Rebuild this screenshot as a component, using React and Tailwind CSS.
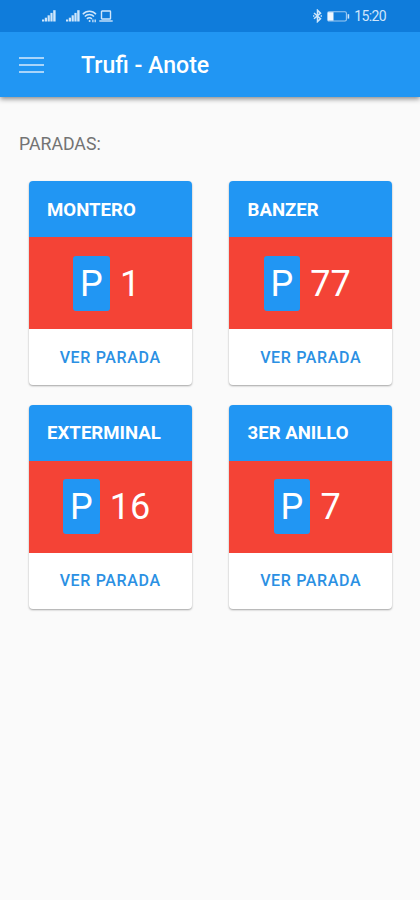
import React from "react";

const stops = [
  { name: "MONTERO", count: 1 },
  { name: "BANZER", count: 77 },
  { name: "EXTERMINAL", count: 16 },
  { name: "3ER ANILLO", count: 7 },
];

function SignalIcon() {
  return (
    <svg width="14" height="12" viewBox="0 0 14 12" fill="currentColor">
      <rect x="0" y="9.5" width="2.2" height="2" />
      <rect x="2.8" y="7.7" width="2.2" height="3.8" />
      <rect x="5.6" y="5.3" width="2.2" height="6.2" />
      <rect x="8.4" y="2.9" width="2.2" height="8.6" />
      <rect x="11.2" y="0.2" width="2.4" height="11.3" />
    </svg>
  );
}

function WifiIcon() {
  return (
    <svg width="15" height="13" viewBox="0 0 15 13" fill="none" stroke="currentColor" strokeWidth="1.5">
      <path d="M0.8 4.2C4.4 0.3 10.4 0.3 14 4.2" />
      <path d="M2.8 6.6C5.4 3.8 9.4 3.8 12 6.6" />
      <path d="M4.9 8.9C6.3 7.4 8.5 7.4 9.9 8.9" />
      <circle cx="7.6" cy="11" r="1" fill="currentColor" stroke="none" />
      <path d="M10.9 9.6V12.2M13.2 9.6V12.2" strokeWidth="1.3" />
    </svg>
  );
}

function LaptopIcon() {
  return (
    <svg width="14" height="12" viewBox="0 0 14 12" fill="none" stroke="currentColor" strokeWidth="1.4">
      <rect x="2.5" y="1" width="9" height="8" rx="0.6" />
      <path d="M0.3 11H13.7" />
    </svg>
  );
}

function BluetoothIcon() {
  return (
    <svg width="9" height="14" viewBox="0 0 9 14" fill="none" stroke="currentColor" strokeWidth="1.5">
      <path d="M1 4L7.5 9.7L4.5 12.6V1.2L7.5 4.1L1 9.8" />
      <path d="M0 6.9H1.4M7.6 6.9H9" />
    </svg>
  );
}

function BatteryIcon() {
  return (
    <svg width="23" height="11" viewBox="0 0 23 11" fill="none" stroke="currentColor">
      <rect x="0.6" y="0.8" width="18.8" height="9.2" rx="1.4" strokeWidth="1.1" strokeOpacity="0.75" />
      <rect x="1" y="1.2" width="5.5" height="8.4" fill="#eef7ff" stroke="none" />
      <path d="M21.4 3.2V7.6" strokeWidth="1.6" />
    </svg>
  );
}

function StatusBar() {
  return (
    <div className="relative z-10 flex h-8 items-center justify-between bg-[#0f7cdb] pr-[34px] pl-[42px] text-[#cfe6fb]">
      <div className="flex items-center">
        <SignalIcon />
        <div className="ml-[10px] flex items-center">
          <SignalIcon />
          <div className="ml-[2px]">
            <WifiIcon />
          </div>
          <div className="ml-[2px]">
            <LaptopIcon />
          </div>
        </div>
      </div>
      <div className="flex items-center">
        <BluetoothIcon />
        <div className="ml-[5px]">
          <BatteryIcon />
        </div>
        <span className="ml-[4px] text-[14px] leading-none tracking-[-0.6px]">15:20</span>
      </div>
    </div>
  );
}

function Toolbar() {
  return (
    <header className="flex h-[65px] items-center bg-[#2196f3] pl-[19px] text-white shadow-[0_2px_5px_rgba(0,0,0,0.45)]">
      <button type="button" aria-label="Menu" className="flex w-[25px] flex-col gap-[5px] text-[#a9d5fa]">
        <span className="h-[2px] bg-current" />
        <span className="h-[2px] bg-current" />
        <span className="h-[2px] bg-current" />
      </button>
      <h1 className="ml-[37px] pt-[3px] text-[23.1px] leading-7 font-medium">Trufi - Anote</h1>
    </header>
  );
}

function StopCard({ name, count }) {
  return (
    <div className="h-[204px] overflow-hidden rounded-[4px] bg-white shadow-[0_1px_2px_rgba(0,0,0,0.35)]">
      <div className="flex h-[56px] items-center bg-[#2196f3] pt-[3px] pl-[18.5px] text-[18.6px] font-bold text-white">
        {name}
      </div>
      <div className="flex h-[92px] items-center justify-center bg-[#f44336] pr-[7px] text-[36px] leading-none text-white">
        <span className="flex h-[55px] w-[36.5px] items-center justify-center rounded-[3px] bg-[#2196f3] pt-[1px]">
          P
        </span>
        <span className="ml-[10.3px] pt-[1px]">{count}</span>
      </div>
      <button
        type="button"
        className="flex h-[56px] w-full items-center justify-center pt-[1px] text-[16px] font-medium tracking-[0.65px] text-[#2b90e3]"
      >
        VER PARADA
      </button>
    </div>
  );
}

function App() {
  return (
    <div className="flex h-[900px] w-[420px] flex-col bg-[#fafafa] font-[Roboto,sans-serif]">
      <StatusBar />
      <Toolbar />
      <main className="pt-[35px]">
        <h2 className="pl-[19px] text-[17.7px] leading-6 text-[#737373]">PARADAS:</h2>
        <div className="mt-[25.3px] grid grid-cols-2 gap-x-[37.3px] gap-y-[19.3px] pr-[27.7px] pl-[28.6px]">
          {stops.map((stop) => (
            <StopCard key={stop.name} name={stop.name} count={stop.count} />
          ))}
        </div>
      </main>
    </div>
  );
}

export default App;
